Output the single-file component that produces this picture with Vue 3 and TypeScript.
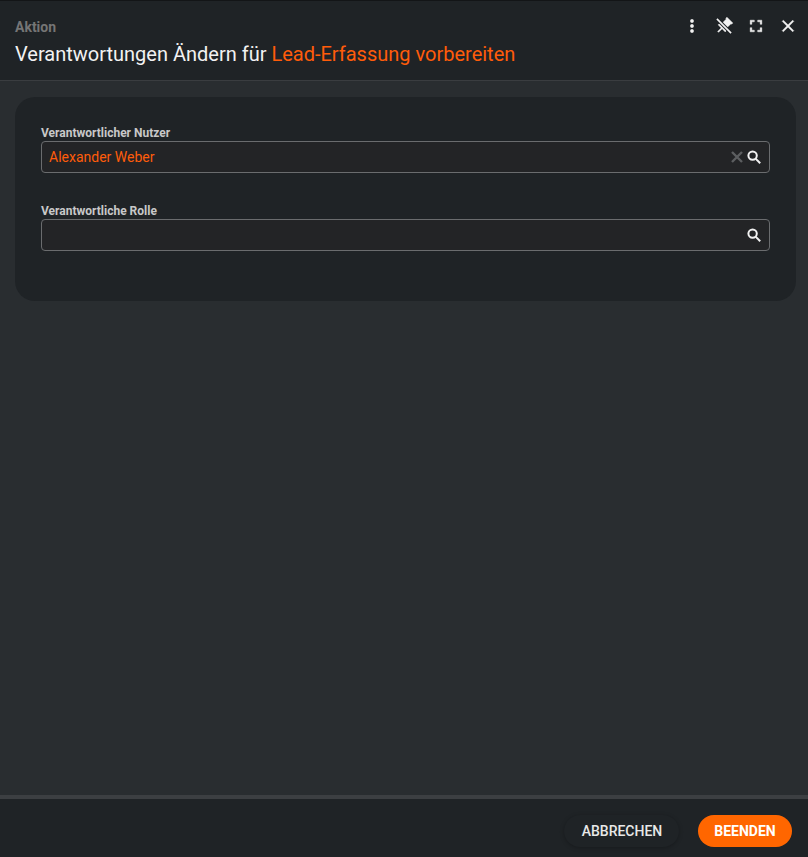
<script setup lang="ts">
interface Field {
  label: string;
  value: string;
}

const fields: Field[] = [
  { label: 'Verantwortlicher Nutzer', value: 'Alexander Weber' },
  { label: 'Verantwortliche Rolle', value: '' },
];
</script>

<template>
  <div class="dialog">
    <header class="head">
      <div class="titles">
        <div class="kicker">Aktion</div>
        <h1 class="title">Verantwortungen Ändern für <span class="accent">Lead-Erfassung vorbereiten</span></h1>
      </div>
      <div class="tools">
        <svg class="tool" viewBox="0 0 24 24"><path d="M12 8a2 2 0 1 0 0-4 2 2 0 0 0 0 4zm0 2a2 2 0 1 0 0 4 2 2 0 0 0 0-4zm0 6a2 2 0 1 0 0 4 2 2 0 0 0 0-4z" /></svg>
        <svg class="tool" viewBox="0 0 24 24">
          <path d="M16 12l2 2v2h-5.2v6h-1.6v-6H6v-2l2-2V4H7V2h10v2h-1z" transform="rotate(45 12 12)" />
          <path class="slash-gap" d="M3 3l18 18" />
          <path class="slash" d="M3.5 3.5l17 17" />
        </svg>
        <svg class="tool" viewBox="0 0 24 24"><path d="M7 14H5v5h5v-2H7v-3zm-2-4h2V7h3V5H5v5zm12 7h-3v2h5v-5h-2v3zM14 5v2h3v3h2V5h-5z" /></svg>
        <svg class="tool" viewBox="0 0 24 24"><path d="M19 6.41 17.59 5 12 10.59 6.41 5 5 6.41 10.59 12 5 17.59 6.41 19 12 13.41 17.59 19 19 17.59 13.41 12z" /></svg>
      </div>
    </header>

    <main class="body">
      <section class="card">
        <div v-for="field in fields" :key="field.label" class="field">
          <label class="label">{{ field.label }}</label>
          <div class="input">
            <span class="value">{{ field.value }}</span>
            <svg v-if="field.value" class="clear" viewBox="0 0 14 14"><path d="M2 2l10 10M12 2L2 12" /></svg>
            <svg class="search" viewBox="0 0 14 14">
              <circle cx="5.6" cy="5.6" r="4.2" />
              <path d="M8.6 8.6l4.6 4.6" />
            </svg>
          </div>
        </div>
      </section>
    </main>

    <footer class="foot">
      <button class="btn ghost">ABBRECHEN</button>
      <button class="btn primary">BEENDEN</button>
    </footer>
  </div>
</template>

<style>
html,
body {
  margin: 0;
  background: #292d30;
}
</style>

<style scoped>
.dialog {
  width: 808px;
  height: 857px;
  display: flex;
  flex-direction: column;
  background: #292d30;
  font-family: Roboto, 'Liberation Sans', sans-serif;
  overflow: hidden;
}

.head {
  flex: none;
  height: 81px;
  box-sizing: border-box;
  display: flex;
  justify-content: space-between;
  padding: 18px 10px 0 15px;
  background: #1f2326;
  border-top: 1px solid #131517;
  border-bottom: 1px solid #3a3d40;
}

.kicker {
  font-size: 14px;
  line-height: 16px;
  font-weight: 700;
  color: #757575;
}

.title {
  margin: 8px 0 0;
  font-size: 20px;
  line-height: 23px;
  font-weight: 400;
  color: #f2f2f2;
}

.accent {
  color: #ff5c0a;
}

.tools {
  display: flex;
  gap: 12px;
  margin-top: -3px;
}

.tool {
  width: 20px;
  height: 20px;
  fill: #f2f2f2;
  stroke: #f2f2f2;
  stroke-width: 0.5;
}

.slash-gap {
  fill: none;
  stroke: #1f2326;
  stroke-width: 4.4;
}

.slash {
  fill: none;
  stroke: #f2f2f2;
  stroke-width: 2;
}

.body {
  flex: 1;
  padding: 16px 12px 0 15px;
}

.card {
  height: 204px;
  box-sizing: border-box;
  padding: 29px 26px 0;
  background: #1f2326;
  border-radius: 20px;
}

.field {
  margin-bottom: 31px;
}

.label {
  display: block;
  font-size: 12px;
  line-height: 14px;
  font-weight: 700;
  color: #c8c8c8;
  margin-bottom: 1px;
}

.input {
  height: 32px;
  box-sizing: border-box;
  display: flex;
  align-items: center;
  padding: 0 8px 0 7px;
  background: #232426;
  border: 1px solid #6a6c6e;
  border-radius: 4px;
}

.value {
  flex: 1;
  font-size: 14px;
  color: #ff5c0a;
}

.clear {
  width: 14px;
  height: 14px;
  margin-right: 3px;
  fill: none;
  stroke: #5c5e60;
  stroke-width: 2.4;
}

.search {
  width: 14px;
  height: 14px;
  fill: none;
  stroke: #f2f2f2;
  stroke-width: 2;
}

.foot {
  flex: none;
  height: 62px;
  box-sizing: border-box;
  display: flex;
  justify-content: flex-end;
  align-items: flex-start;
  gap: 19px;
  padding: 16px 16px 0 0;
  background: #1f2326;
  border-top: 4px solid #3c3f42;
}

.btn {
  height: 32px;
  border: 0;
  border-radius: 16px;
  font-family: inherit;
  font-size: 14px;
  font-weight: 500;
  padding: 0;
}

.ghost {
  width: 115px;
  padding-left: 1px;
  background: #1f2326;
  color: #e8e8e8;
  box-shadow: 0 1px 4px rgba(0, 0, 0, 0.25);
}

.primary {
  width: 94px;
  background: #ff6600;
  color: #ffffff;
  font-weight: 700;
}
</style>
